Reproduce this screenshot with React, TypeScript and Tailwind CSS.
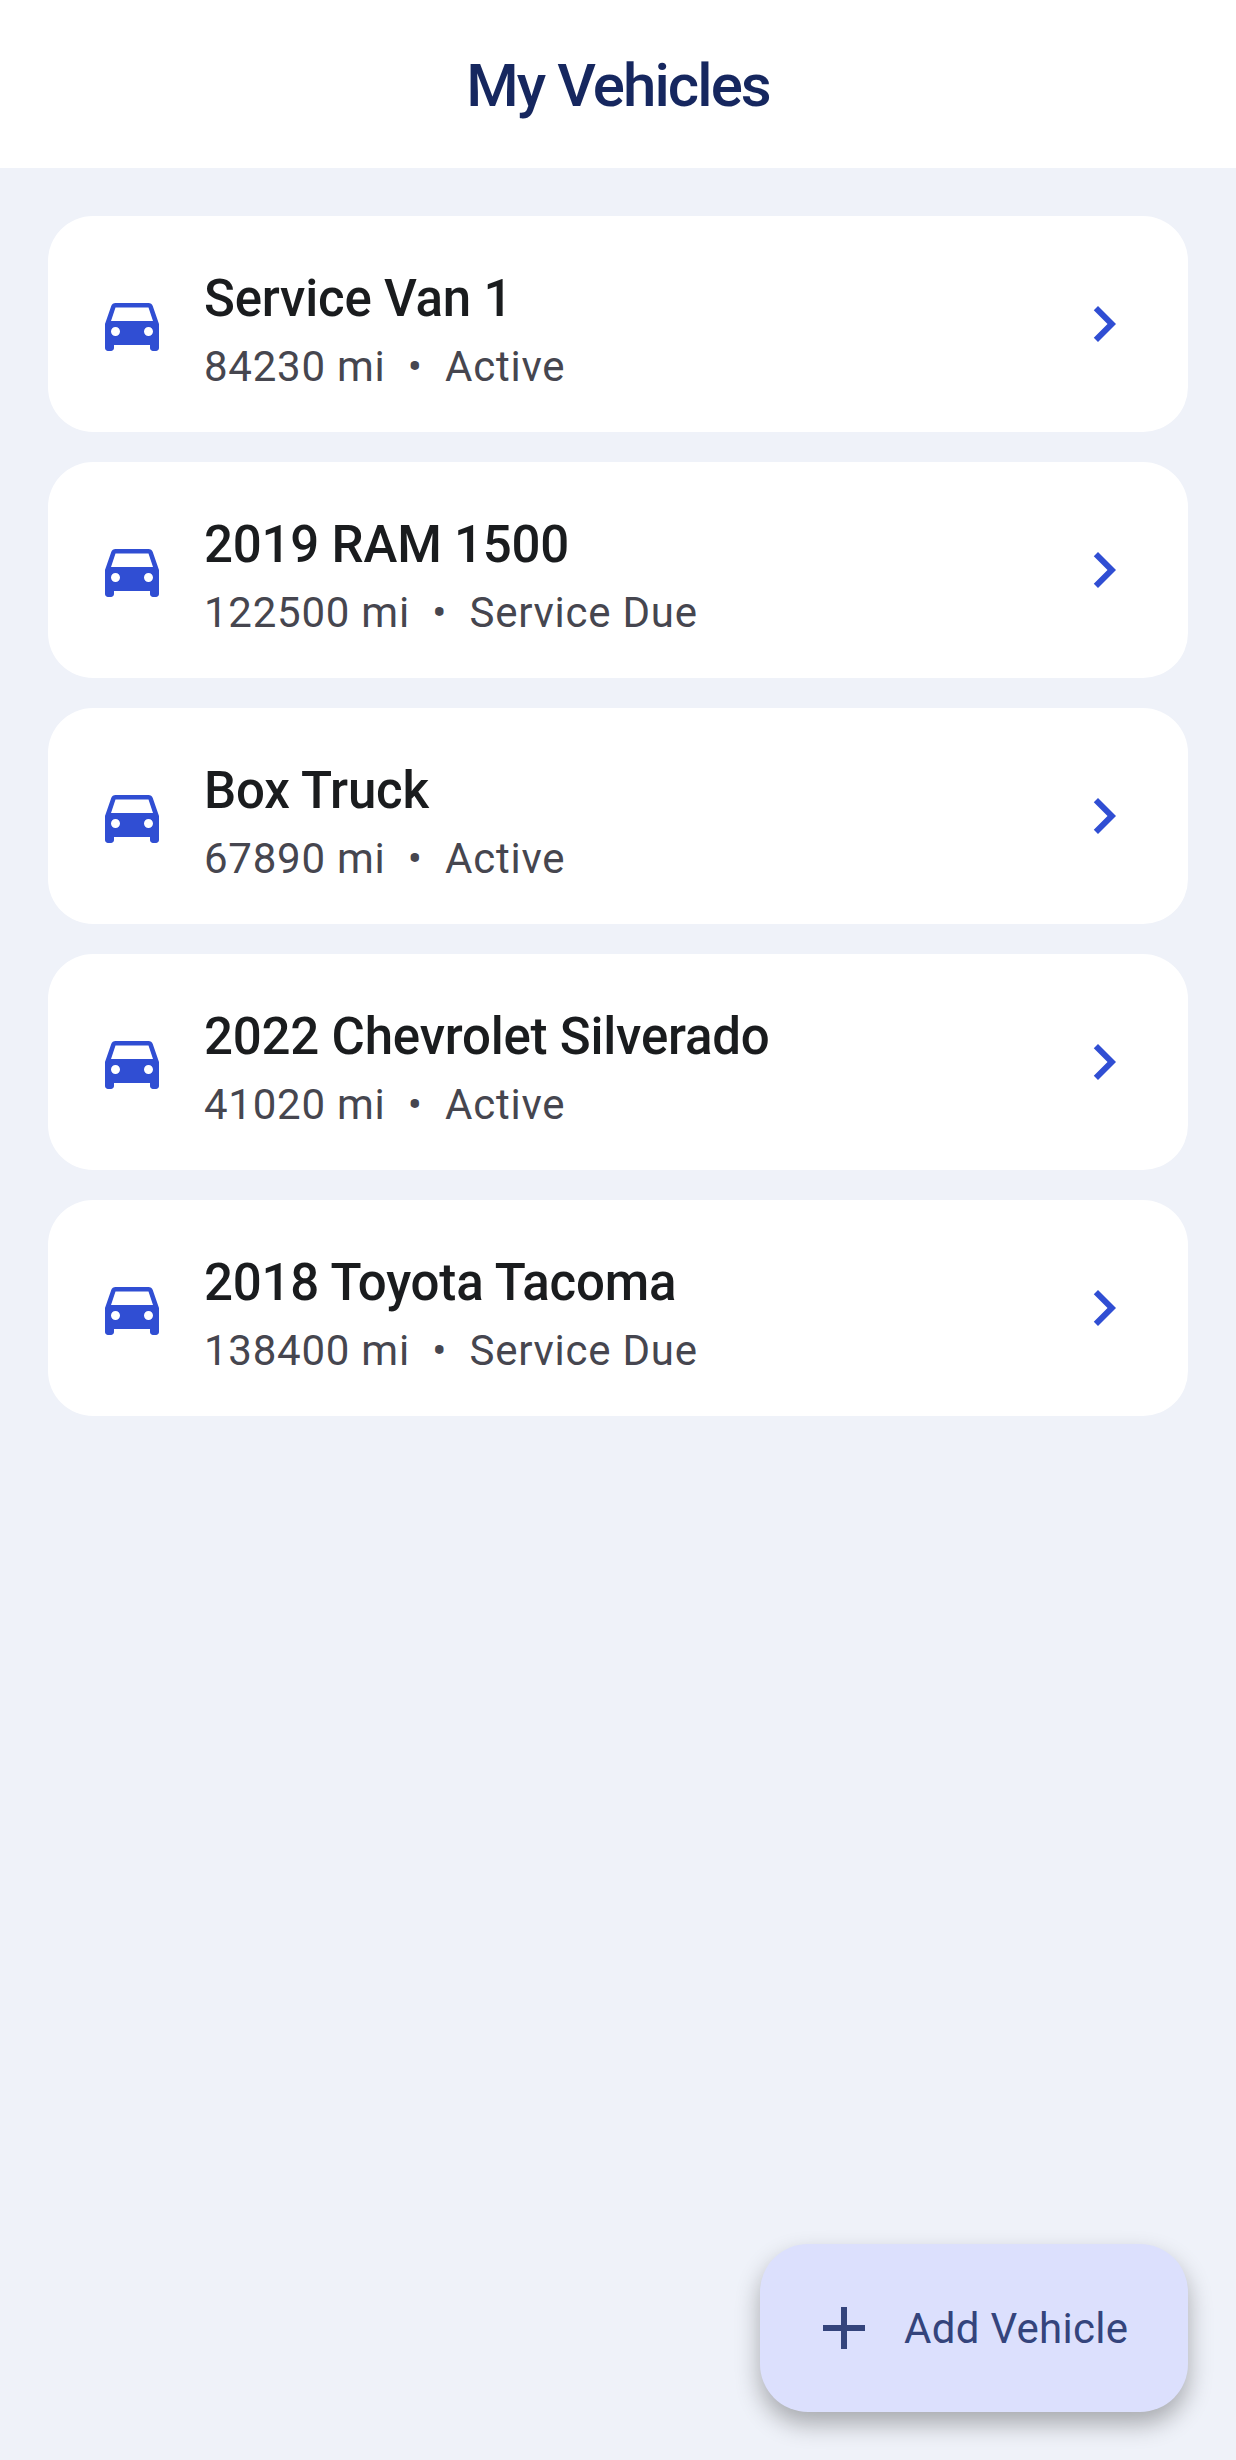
const vehicles = [
  { name: "Service Van 1", meta: "84230 mi", status: "Active" },
  { name: "2019 RAM 1500", meta: "122500 mi", status: "Service Due" },
  { name: "Box Truck", meta: "67890 mi", status: "Active" },
  { name: "2022 Chevrolet Silverado", meta: "41020 mi", status: "Active" },
  { name: "2018 Toyota Tacoma", meta: "138400 mi", status: "Service Due" },
];

function CarIcon() {
  return (
    <svg viewBox="0 0 24 24" className="w-[72px] h-[72px] shrink-0 fill-[#304ed3]">
      <path d="M18.92 6.01C18.72 5.42 18.16 5 17.5 5h-11c-.66 0-1.21.42-1.42 1.01L3 12v8c0 .55.45 1 1 1h1c.55 0 1-.45 1-1v-1h12v1c0 .55.45 1 1 1h1c.55 0 1-.45 1-1v-8l-2.08-5.99zM6.5 16c-.83 0-1.5-.67-1.5-1.5S5.67 13 6.5 13s1.5.67 1.5 1.5S7.33 16 6.5 16zm11 0c-.83 0-1.5-.67-1.5-1.5s.67-1.5 1.5-1.5 1.5.67 1.5 1.5-.67 1.5-1.5 1.5zM5 11l1.5-4.5h11L19 11H5z" />
    </svg>
  );
}

function Chevron() {
  return (
    <svg viewBox="0 0 24 24" className="w-[72px] h-[72px] shrink-0 fill-[#304ed3]">
      <path d="M10 6L8.59 7.41 13.17 12l-4.58 4.59L10 18l6-6z" />
    </svg>
  );
}

export default function App() {
  return (
    <div className="relative w-[1236px] h-[2460px] overflow-hidden bg-[#eff2f9] font-['Roboto',sans-serif]">
      <header className="h-[168px] bg-white flex items-center justify-center pt-[4px]">
        <h1 className="text-[60px] leading-[72px] font-[530] tracking-[-1.9px] text-[#16275f]">My Vehicles</h1>
      </header>
      <main className="flex flex-col gap-[30px] px-[48px] pt-[48px]">
        {vehicles.map((v) => (
          <div key={v.name} className="h-[216px] bg-white rounded-[45px] flex items-center px-[48px]">
            <CarIcon />
            <div className="ml-[36px] flex-1 flex flex-col pt-[14px]">
              <div className="text-[51px] leading-[66px] font-[530] tracking-[-0.2px] text-[#1a1c1e]">{v.name}</div>
              <div className="mt-[5px] text-[42px] leading-[60px] tracking-[0.75px] text-[#46464f] whitespace-pre">
                {v.meta}{"  •  "}{v.status}
              </div>
            </div>
            <Chevron />
          </div>
        ))}
      </main>
      <button className="absolute right-[48px] top-[2244px] w-[428px] h-[168px] rounded-[48px] bg-[#dce0fd] flex items-center shadow-[0_12px_24px_rgba(0,0,0,0.3)] pl-[48px]">
        <svg viewBox="0 0 24 24" className="w-[72px] h-[72px] shrink-0 fill-[#34447c]">
          <path d="M19 13h-6v6h-2v-6H5v-2h6V5h2v6h6v2z" />
        </svg>
        <span className="ml-[24px] text-[42px] tracking-[0.3px] text-[#34447c]">Add Vehicle</span>
      </button>
    </div>
  );
}
